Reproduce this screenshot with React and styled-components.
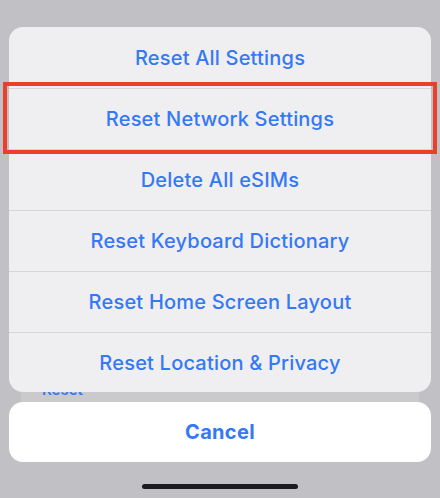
import React from 'react';
import styled, { createGlobalStyle } from 'styled-components';

const GlobalStyle = createGlobalStyle`
  html, body {
    margin: 0;
    padding: 0;
    background: #c1c0c5;
  }
  * { box-sizing: border-box; }
`;

const Screen = styled.div`
  position: relative;
  width: 440px;
  height: 498px;
  overflow: hidden;
  background: #c1c0c5;
  font-family: Inter, "Noto Sans", "Liberation Sans", sans-serif;
  display: flex;
  flex-direction: column;
  padding: 27px 9px 0;
`;

const Group = styled.div`
  background: #efeff1;
  border-radius: 14px;
  overflow: hidden;
  display: flex;
  flex-direction: column;
`;

const Row = styled.button`
  appearance: none;
  border: 0;
  border-top: ${p => (p.$first ? '0' : '1px solid #d6d6d9')};
  background: transparent;
  height: ${p => p.$h || 61}px;
  display: flex;
  align-items: center;
  justify-content: center;
  font-family: inherit;
  font-size: 20px;
  font-weight: 500;
  color: #3478f6;
  letter-spacing: 0.2px;
  padding: 0;
`;

const Peek = styled.div`
  height: 10px;
  margin: 0 12px;
  background: #cacacc;
  overflow: hidden;
  padding-left: 21px;
`;

const PeekText = styled.div`
  margin-top: -12px;
  font-size: 15px;
  font-weight: 600;
  color: #3478f6;
`;

const CancelCard = styled.button`
  appearance: none;
  border: 0;
  background: #ffffff;
  border-radius: 14px;
  height: 60px;
  display: flex;
  align-items: center;
  justify-content: center;
  font-family: inherit;
  font-size: 20px;
  font-weight: 700;
  letter-spacing: 0.3px;
  color: #3478f6;
`;

const HomeBar = styled.div`
  align-self: center;
  width: 156px;
  height: 5px;
  border-radius: 3px;
  background: #1c1c1e;
  margin-top: 22px;
`;

const Highlight = styled.div`
  position: absolute;
  left: 3px;
  top: 82px;
  width: 434px;
  height: 72px;
  border: 4px solid #ea3f2b;
  pointer-events: none;
`;

const items = [
  'Reset All Settings',
  'Reset Network Settings',
  'Delete All eSIMs',
  'Reset Keyboard Dictionary',
  'Reset Home Screen Layout',
  'Reset Location & Privacy',
];

export default function App() {
  return (
    <>
      <GlobalStyle />
      <Screen>
        <Group>
          {items.map((t, i) => (
            <Row key={t} $first={i === 0} $h={i === items.length - 1 ? 60 : 61}>
              {t}
            </Row>
          ))}
        </Group>
        <Peek>
          <PeekText>Reset</PeekText>
        </Peek>
        <CancelCard>Cancel</CancelCard>
        <HomeBar />
        <Highlight />
      </Screen>
    </>
  );
}
